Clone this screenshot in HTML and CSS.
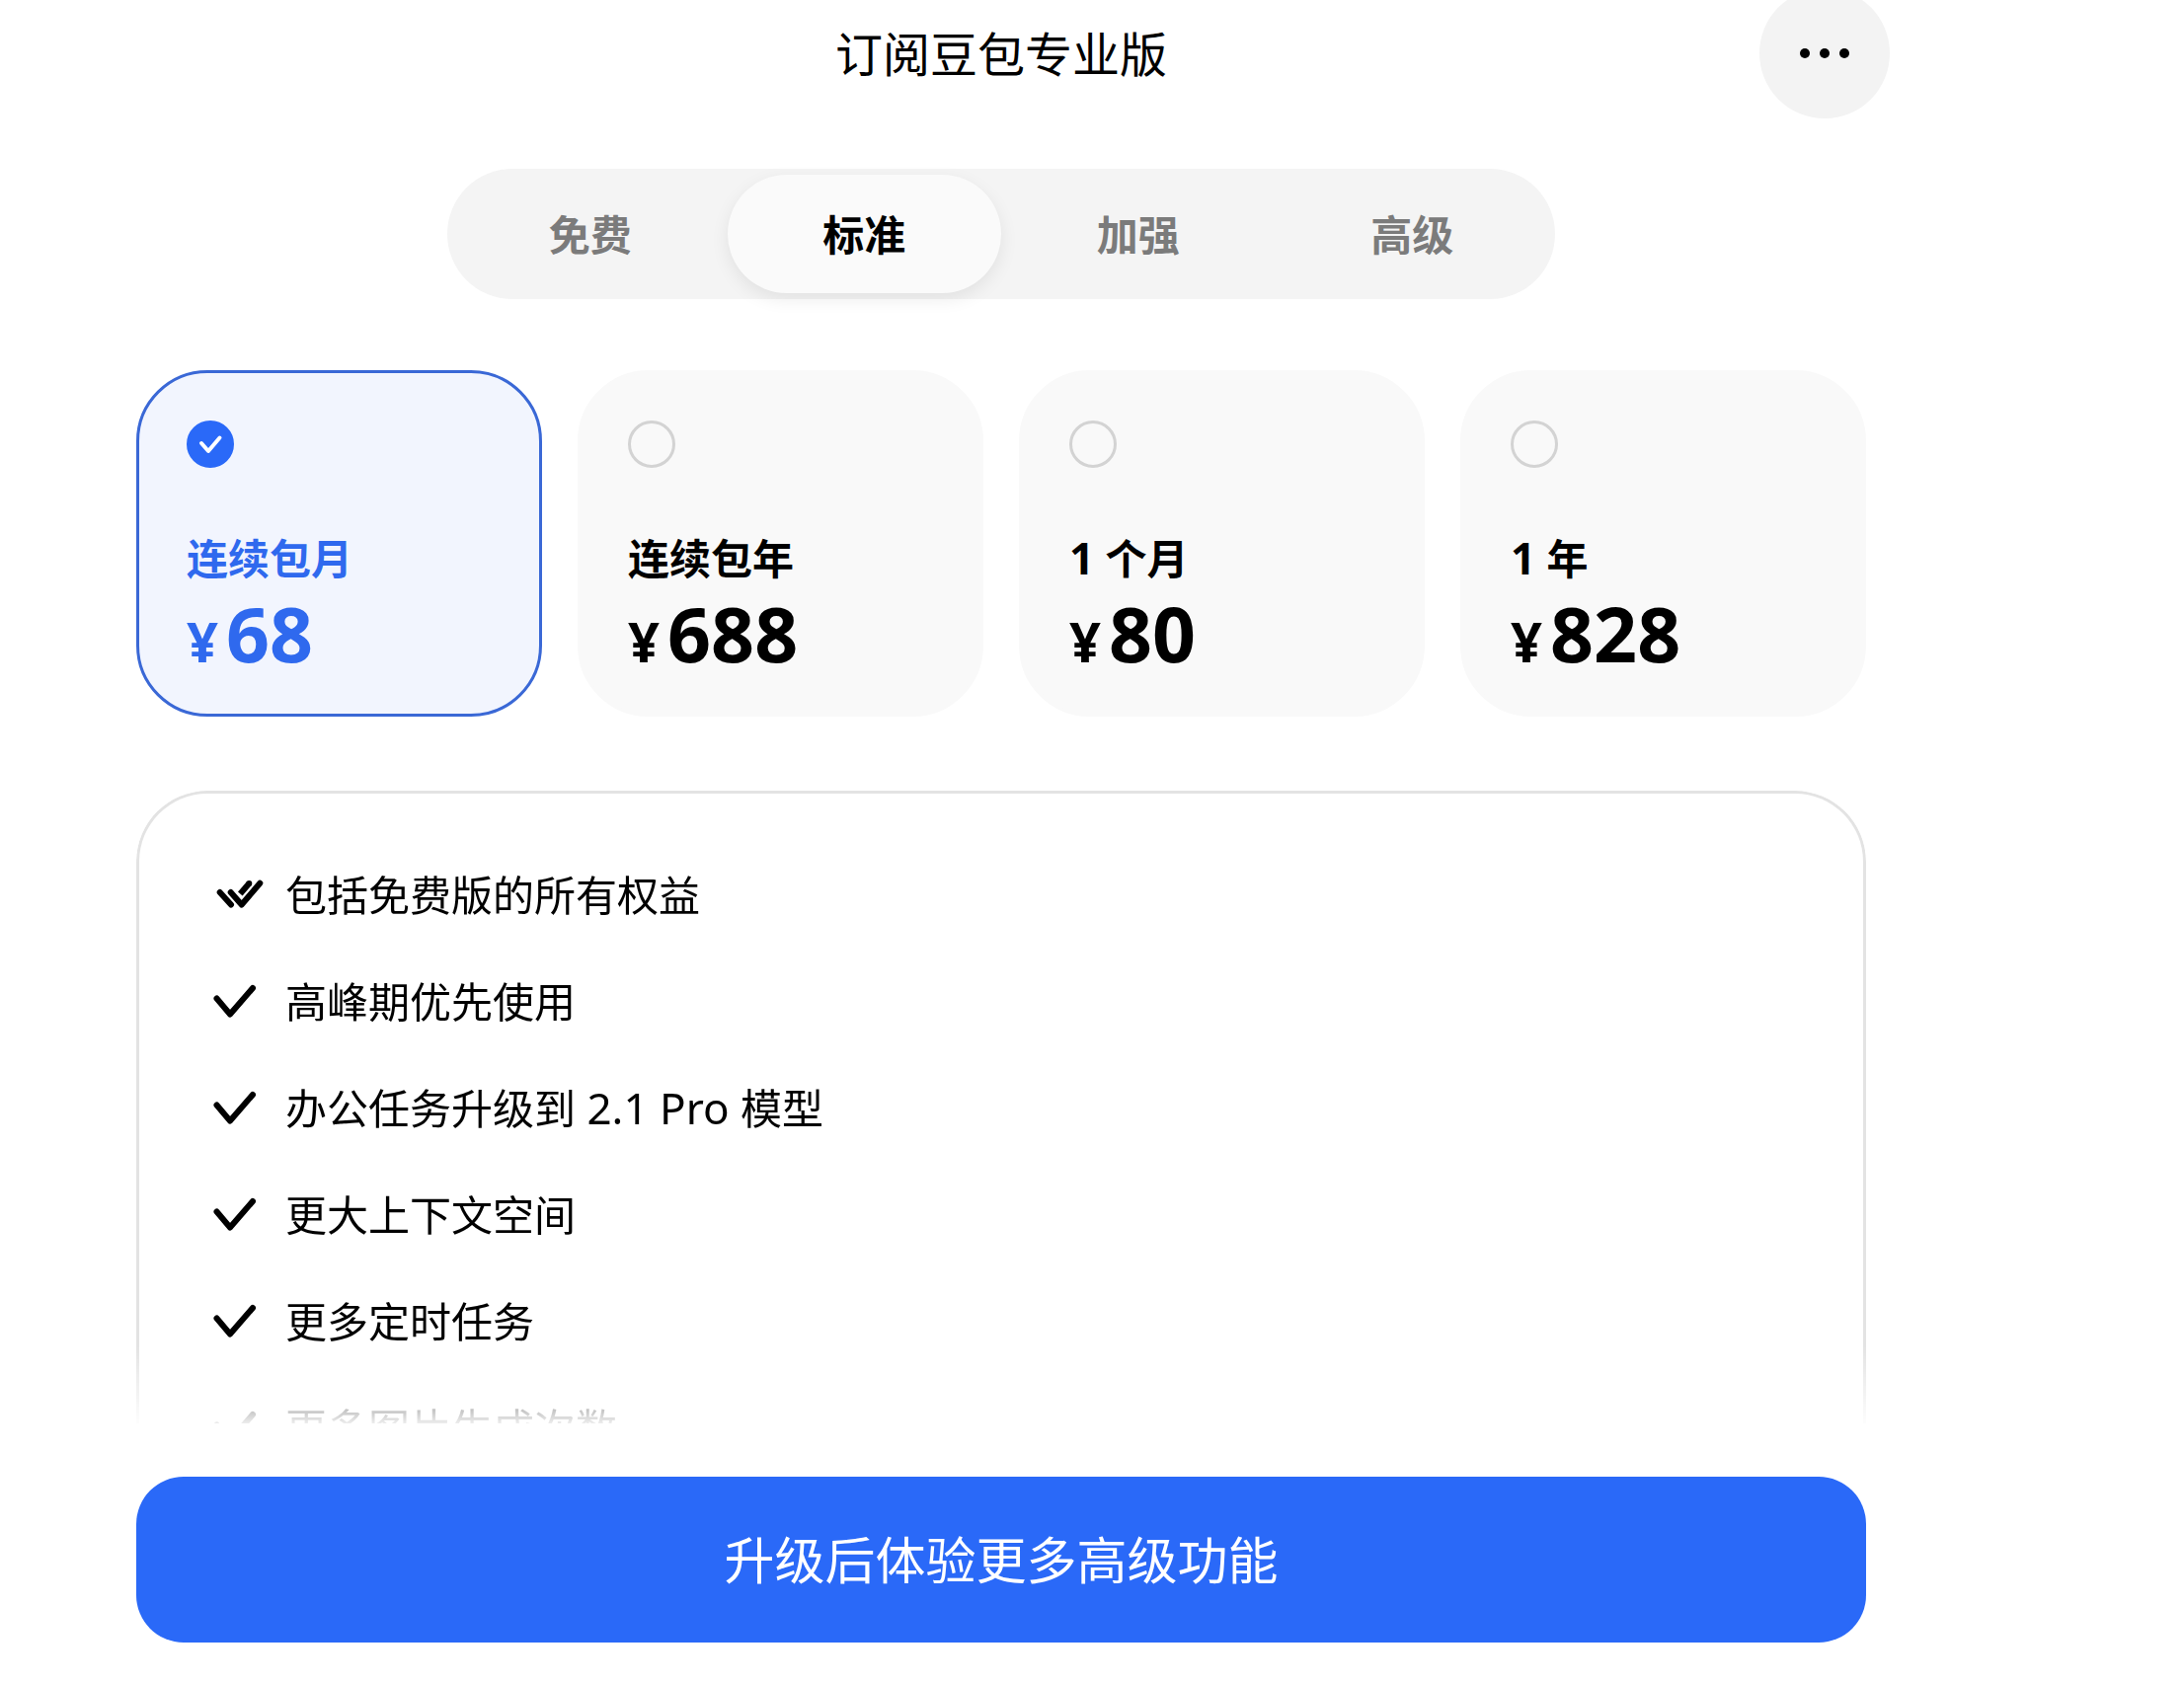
FILE: index.html
```html
<!DOCTYPE html>
<html lang="zh-CN">
<head>
  <meta charset="utf-8">
  <meta name="viewport" content="width=device-width, initial-scale=1">
  <title>订阅豆包专业版</title>
  <link rel="stylesheet" href="styles.css">
</head>
<body>
  <svg class="defs" aria-hidden="true">
    <symbol id="check" viewBox="0 0 54 48">
      <path d="M6.500 20.500 20 36.500 43 10" fill="none" stroke="currentColor" stroke-width="6" stroke-linecap="round" stroke-linejoin="round"/>
    </symbol>
    <symbol id="double-check" viewBox="0 0 54 48">
      <g fill="none" stroke="currentColor" stroke-width="6" stroke-linejoin="round">
        <path d="M9.700 21 21 33.500M20.700 21 31.700 33.500 50.300 11.700" stroke-linecap="round"/>
        <path d="M39.300 12 30.300 22.500"/>
        <path d="M39.300 12h.01" stroke-linecap="round"/>
      </g>
    </symbol>
  </svg>
  <main class="page">
    <header class="header">
      <h1 class="header-title">订阅豆包专业版</h1>
      <button class="more" type="button" aria-label="更多">
        <svg class="more-icon" viewBox="0 0 54 12" aria-hidden="true">
          <circle cx="7" cy="6" r="5"/><circle cx="27" cy="6" r="5"/><circle cx="47" cy="6" r="5"/>
        </svg>
      </button>
    </header>

    <div class="tabs" role="tablist">
      <button class="tab" type="button" role="tab" aria-selected="false">免费</button>
      <button class="tab tab-active" type="button" role="tab" aria-selected="true">标准</button>
      <button class="tab" type="button" role="tab" aria-selected="false">加强</button>
      <button class="tab" type="button" role="tab" aria-selected="false">高级</button>
    </div>

    <div class="plans" role="radiogroup">
      <label class="plan">
        <span class="choice">
          <input class="radio" type="radio" name="plan" checked>
          <svg class="tick" viewBox="0 0 48 48" aria-hidden="true"><path d="M15 23 22 31 33.500 17.500"/></svg>
        </span>
        <span class="plan-name">连续包月</span>
        <span class="price"><span class="currency">¥</span>68</span>
      </label>
      <label class="plan">
        <span class="choice"><input class="radio" type="radio" name="plan"></span>
        <span class="plan-name">连续包年</span>
        <span class="price"><span class="currency">¥</span>688</span>
      </label>
      <label class="plan">
        <span class="choice"><input class="radio" type="radio" name="plan"></span>
        <span class="plan-name"><span class="latin">1 </span>个月</span>
        <span class="price"><span class="currency">¥</span>80</span>
      </label>
      <label class="plan">
        <span class="choice"><input class="radio" type="radio" name="plan"></span>
        <span class="plan-name"><span class="latin">1 </span>年</span>
        <span class="price"><span class="currency">¥</span>828</span>
      </label>
    </div>

    <ul class="benefits">
      <li class="benefit"><svg class="mark" aria-hidden="true"><use href="#double-check"/></svg><span>包括免费版的所有权益</span></li>
      <li class="benefit"><svg class="mark" aria-hidden="true"><use href="#check"/></svg><span>高峰期优先使用</span></li>
      <li class="benefit"><svg class="mark" aria-hidden="true"><use href="#check"/></svg><span>办公任务升级到<span class="latin"> 2.1 Pro </span>模型</span></li>
      <li class="benefit"><svg class="mark" aria-hidden="true"><use href="#check"/></svg><span>更大上下文空间</span></li>
      <li class="benefit"><svg class="mark" aria-hidden="true"><use href="#check"/></svg><span>更多定时任务</span></li>
      <li class="benefit"><svg class="mark" aria-hidden="true"><use href="#check"/></svg><span>更多图片生成次数</span></li>
    </ul>

    <button class="upgrade" type="button">升级后体验更多高级功能</button>
  </main>
</body>
</html>
```
FILE: styles.css
```css
* {
  box-sizing: border-box;
}

body {
  margin: 0;
  background: #fff;
  color: #000;
  font-family: "Noto Sans", "Noto Sans CJK SC", sans-serif;
  font-size: 42px;
  line-height: 60px;
}

button {
  padding: 0;
  border: 0;
  font: inherit;
  color: inherit;
  cursor: pointer;
}

.defs {
  display: none;
}

.page {
  display: flex;
  flex-direction: column;
  height: 100vh;
  padding: 0 322px 40px 138px;
}

.header {
  display: grid;
  flex: none;
  align-items: center;
  height: 132px;
  margin: -12px -24px 0 0;
}

.header-title,
.more {
  grid-area: 1 / 1;
}

.header-title {
  margin: 0 24px 0 0;
  padding-top: 2px;
  font-size: 48px;
  font-weight: 400;
  text-align: center;
}

.more {
  display: grid;
  place-items: center;
  justify-self: end;
  width: 132px;
  height: 132px;
  border-radius: 50%;
  background: #f3f3f3;
}

.more-icon {
  width: 54px;
  height: 12px;
}

.tabs {
  display: grid;
  flex: none;
  grid-template-columns: repeat(4, 1fr);
  align-self: center;
  width: 1122px;
  max-width: 100%;
  height: 132px;
  margin-top: 51px;
  padding: 6px;
  border-radius: 66px;
  background: #f4f4f4;
}

.tab {
  padding-top: 2px;
  border-radius: 60px;
  background: transparent;
  color: #7b7b7b;
  font-weight: 700;
}

.tab-active {
  background: #fafafa;
  color: #000;
  box-shadow: 0 6px 18px rgba(0, 0, 0, 0.08);
}

.plans {
  display: grid;
  flex: none;
  grid-template-columns: repeat(4, 1fr);
  gap: 36px;
  margin-top: 72px;
}

.plan {
  display: flex;
  flex-direction: column;
  padding: 48px 48px 45px;
  border: 3px solid #f9f9f9;
  border-radius: 72px;
  background: #f9f9f9;
  font-weight: 700;
  cursor: pointer;
}

.plan:has(:checked) {
  border-color: #3a68d6;
  background: #f2f5fe;
  color: #2f69ee;
}

.choice {
  display: grid;
  width: 48px;
  height: 48px;
}

.radio,
.tick {
  grid-area: 1 / 1;
  width: 48px;
  height: 48px;
}

.radio {
  appearance: none;
  margin: 0;
  border: 3px solid #d3d3d3;
  border-radius: 50%;
}

.radio:checked {
  border-color: #2a69f8;
  background: #2a69f8;
}

.tick {
  fill: none;
  stroke: #fff;
  stroke-width: 4;
  stroke-linecap: round;
  stroke-linejoin: round;
  pointer-events: none;
}

.plan-name {
  margin-top: 62px;
}

.latin {
  font-size: 44px;
  line-height: 1;
  white-space: pre;
}

.price {
  margin-top: 10px;
  font-size: 77px;
  line-height: 72px;
}

.currency {
  margin-right: 8px;
  font-size: 56px;
  line-height: 1;
}

.benefits {
  display: flex;
  flex: 1 1 0;
  flex-direction: column;
  gap: 48px;
  min-height: 0;
  margin: 75px 0 0;
  padding: 73px 72px 0;
  overflow: hidden;
  border: 3px solid #e3e3e3;
  border-bottom: 0;
  border-radius: 72px 72px 0 0;
  list-style: none;
  mask-image: linear-gradient(#000 calc(100% - 78px), transparent calc(100% + 6px));
}

.benefit {
  display: flex;
  flex: none;
  align-items: center;
  gap: 22px;
  height: 60px;
}

.mark {
  width: 54px;
  height: 48px;
}

.upgrade {
  flex: none;
  height: 168px;
  margin-top: 54px;
  border-radius: 48px;
  background: #2a69f8;
  color: #fff;
  font-size: 51px;
}
```
